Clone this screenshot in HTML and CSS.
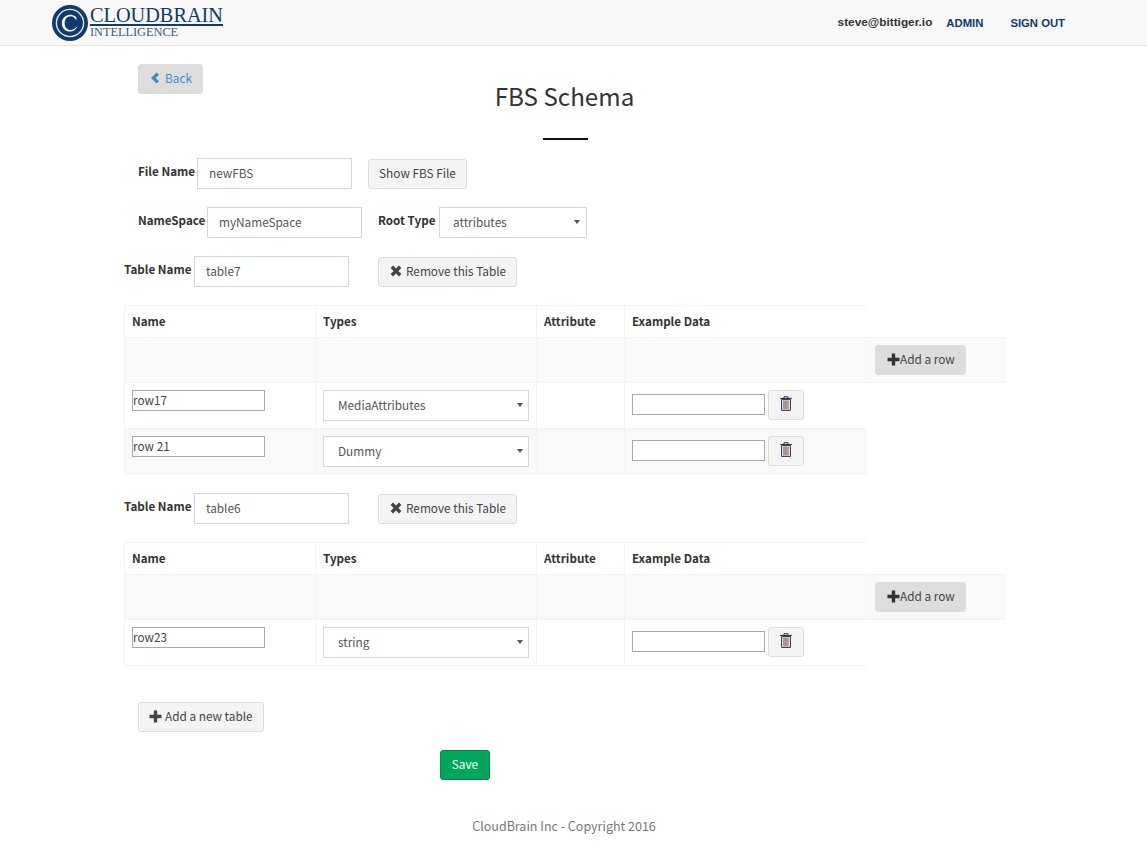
FILE: index.html
```html
<!DOCTYPE html>
<html lang="en">
<head>
<meta charset="utf-8">
<title>FBS Schema</title>
<link rel="stylesheet" href="styles.css">
</head>
<body>
<header class="topbar">
  <a class="logo">
    <svg class="logo-mark" width="36" height="36" viewBox="0 0 36 36">
      <circle cx="18" cy="18" r="18" fill="#0f3a6e"/>
      <circle cx="18" cy="18" r="13.6" fill="none" stroke="#dfe6ee" stroke-width="1.4"/>
      <path d="M24.5 12.6 L24.3 15.5 C23 12.4 21 11.3 18.8 11.3 C15 11.3 12.6 14.2 12.6 18.2 C12.6 22.3 15.2 25 18.9 25 C21.2 25 23.2 23.8 24.6 21.6 L25 22 C23.6 25 21 26.5 18 26.5 C13.3 26.5 9.9 23 9.9 18.2 C9.9 13.4 13.4 9.8 18 9.8 C20 9.8 21.6 10.4 23.4 11.5 Z" fill="#fff"/>
    </svg>
    <span class="logo-text">
      <span class="logo-top">CLOUDBRAIN</span>
      <span class="logo-bottom">INTELLIGENCE</span>
    </span>
  </a>
  <nav class="topnav">
    <span class="user">steve@bittiger.io</span>
    <a class="nav-link nav-admin">ADMIN</a>
    <a class="nav-link">SIGN OUT</a>
  </nav>
</header>

<main class="page">
  <div class="title-block">
    <button class="btn btn-back" type="button">
      <svg class="icon" width="10" height="12" viewBox="0 0 10 12"><path d="M6.6 0.4 L9 2.8 L5.8 6 L9 9.2 L6.6 11.6 L1 6 Z" fill="#3c8dbc"/></svg>
      <span>Back</span>
    </button>
    <h1 class="title">FBS Schema</h1>
  </div>
  <div class="title-rule"></div>

  <div class="form-row indent">
    <label class="field-label label-file">File Name</label>
    <input class="text-input" type="text" value="newFBS">
    <button class="btn btn-show" type="button">Show FBS File</button>
  </div>

  <div class="form-row indent">
    <label class="field-label label-ns">NameSpace</label>
    <input class="text-input" type="text" value="myNameSpace">
    <label class="field-label root-label">Root Type</label>
    <span class="select-wrap root-select">
      <select class="select"><option>attributes</option></select>
    </span>
  </div>

  <div class="form-row">
    <label class="field-label table-label">Table Name</label>
    <input class="text-input" type="text" value="table7">
    <button class="btn btn-remove" type="button">
      <svg class="icon" width="12" height="12" viewBox="0 0 12 12"><path d="M3 0.6 L6 3.6 L9 0.6 L11.4 3 L8.4 6 L11.4 9 L9 11.4 L6 8.4 L3 11.4 L0.6 9 L3.6 6 L0.6 3 Z" fill="#444"/></svg>
      <span>Remove this Table</span>
    </button>
  </div>

  <table class="schema">
    <colgroup><col class="c-name"><col class="c-types"><col class="c-attr"><col class="c-data"><col class="c-add"></colgroup>
    <thead>
      <tr><th>Name</th><th>Types</th><th>Attribute</th><th>Example Data</th></tr>
    </thead>
    <tbody>
      <tr class="odd add-row"><td></td><td></td><td></td><td></td>
        <td><button class="btn btn-add" type="button"><svg class="icon" width="13" height="13" viewBox="0 0 13 13"><path d="M4.8 0.5 H8.2 V4.8 H12.5 V8.2 H8.2 V12.5 H4.8 V8.2 H0.5 V4.8 H4.8 Z" fill="#333"/></svg><span>Add a row</span></button></td></tr>
      <tr>
        <td><input class="plain-input" type="text" value="row17"></td>
        <td><span class="select-wrap cell-select"><select class="select"><option>MediaAttributes</option></select></span></td>
        <td></td>
        <td><div class="data-cell"><input class="plain-input" type="text"><button class="btn btn-trash" type="button"><svg class="trash" width="12" height="15" viewBox="0 0 12 15"><path d="M4 2 V0.7 H8 V2" fill="none" stroke="#3b3b50" stroke-width="1"/><path d="M0.2 2.5 H11.8" stroke="#33334a" stroke-width="1.2"/><path d="M1.5 3.5 H10.5 V14.5 H1.5 Z" fill="#e2dad4" stroke="#45455e" stroke-width="1"/><path d="M4 4.5 V13.5" stroke="#4a6aa8" stroke-width="1.1"/><path d="M6 4.5 V13.5" stroke="#6a5a70" stroke-width="1.1"/><path d="M8 4.5 V13.5" stroke="#b86a38" stroke-width="1.1"/></svg></button></div></td>
      </tr>
      <tr class="odd">
        <td><input class="plain-input" type="text" value="row 21"></td>
        <td><span class="select-wrap cell-select"><select class="select"><option>Dummy</option></select></span></td>
        <td></td>
        <td><div class="data-cell"><input class="plain-input" type="text"><button class="btn btn-trash" type="button"><svg class="trash" width="12" height="15" viewBox="0 0 12 15"><path d="M4 2 V0.7 H8 V2" fill="none" stroke="#3b3b50" stroke-width="1"/><path d="M0.2 2.5 H11.8" stroke="#33334a" stroke-width="1.2"/><path d="M1.5 3.5 H10.5 V14.5 H1.5 Z" fill="#e2dad4" stroke="#45455e" stroke-width="1"/><path d="M4 4.5 V13.5" stroke="#4a6aa8" stroke-width="1.1"/><path d="M6 4.5 V13.5" stroke="#6a5a70" stroke-width="1.1"/><path d="M8 4.5 V13.5" stroke="#b86a38" stroke-width="1.1"/></svg></button></div></td>
      </tr>
    </tbody>
  </table>

  <div class="form-row">
    <label class="field-label table-label">Table Name</label>
    <input class="text-input" type="text" value="table6">
    <button class="btn btn-remove" type="button">
      <svg class="icon" width="12" height="12" viewBox="0 0 12 12"><path d="M3 0.6 L6 3.6 L9 0.6 L11.4 3 L8.4 6 L11.4 9 L9 11.4 L6 8.4 L3 11.4 L0.6 9 L3.6 6 L0.6 3 Z" fill="#444"/></svg>
      <span>Remove this Table</span>
    </button>
  </div>

  <table class="schema">
    <colgroup><col class="c-name"><col class="c-types"><col class="c-attr"><col class="c-data"><col class="c-add"></colgroup>
    <thead>
      <tr><th>Name</th><th>Types</th><th>Attribute</th><th>Example Data</th></tr>
    </thead>
    <tbody>
      <tr class="odd add-row"><td></td><td></td><td></td><td></td>
        <td><button class="btn btn-add" type="button"><svg class="icon" width="13" height="13" viewBox="0 0 13 13"><path d="M4.8 0.5 H8.2 V4.8 H12.5 V8.2 H8.2 V12.5 H4.8 V8.2 H0.5 V4.8 H4.8 Z" fill="#333"/></svg><span>Add a row</span></button></td></tr>
      <tr>
        <td><input class="plain-input" type="text" value="row23"></td>
        <td><span class="select-wrap cell-select"><select class="select"><option>string</option></select></span></td>
        <td></td>
        <td><div class="data-cell"><input class="plain-input" type="text"><button class="btn btn-trash" type="button"><svg class="trash" width="12" height="15" viewBox="0 0 12 15"><path d="M4 2 V0.7 H8 V2" fill="none" stroke="#3b3b50" stroke-width="1"/><path d="M0.2 2.5 H11.8" stroke="#33334a" stroke-width="1.2"/><path d="M1.5 3.5 H10.5 V14.5 H1.5 Z" fill="#e2dad4" stroke="#45455e" stroke-width="1"/><path d="M4 4.5 V13.5" stroke="#4a6aa8" stroke-width="1.1"/><path d="M6 4.5 V13.5" stroke="#6a5a70" stroke-width="1.1"/><path d="M8 4.5 V13.5" stroke="#b86a38" stroke-width="1.1"/></svg></button></div></td>
      </tr>
    </tbody>
  </table>

  <div class="new-table">
    <button class="btn btn-new" type="button">
      <svg class="icon" width="13" height="13" viewBox="0 0 13 13"><path d="M4.8 0.5 H8.2 V4.8 H12.5 V8.2 H8.2 V12.5 H4.8 V8.2 H0.5 V4.8 H4.8 Z" fill="#444"/></svg>
      <span>Add a new table</span>
    </button>
  </div>
  <div class="save-row"><button class="btn btn-save" type="button">Save</button></div>
  <footer class="footer">CloudBrain Inc - Copyright 2016</footer>
</main>
</body>
</html>
```
FILE: styles.css
```css
* { box-sizing: border-box; }
html, body { margin: 0; padding: 0; }
body {
  background: #fff;
  color: #333;
  font-family: "Noto Sans CJK SC", "Noto Sans", sans-serif;
  font-size: 11.8px;
  line-height: 20px;
}
.topbar {
  height: 46px;
  background: #f8f8f8;
  border-bottom: 1px solid #e7e7e7;
  display: flex;
  justify-content: space-between;
  padding: 5px 82px 0 52px;
}
.logo { display: flex; gap: 2px; align-items: flex-start; }
.logo-text {
  display: flex;
  flex-direction: column;
  font-family: "Liberation Serif", serif;
  padding-top: 2px;
}
.logo-top {
  font-size: 20.3px;
  line-height: 17px;
  color: #0f3a6e;
  border-bottom: 2px solid #0f3a6e;
  width: 133px;
  white-space: nowrap;
}
.logo-bottom {
  font-size: 12.3px;
  line-height: 13px;
  color: #3d587c;
  white-space: nowrap;
}
.topnav {
  display: flex;
  align-items: flex-start;
  font-family: "Liberation Sans", sans-serif;
  font-weight: 700;
  line-height: 16px;
  padding-top: 9px;
}
.user { color: #333; margin-right: 14px; font-size: 11.8px; }
.nav-link { color: #0f3a6e; margin-top: 1px; font-size: 11.3px; }
.nav-admin { margin-right: 27px; }
.page { width: 881px; margin-left: 124px; padding-top: 18px; }
.title-block { display: grid; height: 74px; }
.title-block > * { grid-area: 1 / 1; }
.btn {
  font: inherit;
  height: 30px;
  border: 1px solid #ddd;
  border-radius: 3px;
  background: #f4f4f4;
  color: #444;
  padding: 0 11px 2px;
  display: inline-flex;
  align-items: center;
  gap: 3px;
  white-space: nowrap;
}
.btn-back {
  justify-self: start;
  margin-left: 14px;
  background: #ddd;
  border-color: #ddd;
  color: #3c8dbc;
  width: 65px;
  gap: 5px;
}
.title {
  justify-self: center;
  margin: 14px 0 0;
  font-size: 24.2px;
  font-weight: 400;
  line-height: 36px;
  color: #333;
  align-self: start;
}
.title-rule { width: 45px; height: 2px; background: #111; margin: 0 0 18px 419px; }
.form-row { display: flex; align-items: flex-start; height: 31px; margin-bottom: 18px; }
.indent { margin-left: 14px; }
.field-label { font-weight: 700; font-size: 11.65px; margin: 3px 0 0; white-space: nowrap; line-height: 20px; flex: none; }
.label-file { width: 59px; }
.label-ns { width: 69px; }
.table-label { width: 70px; }
.root-label { width: 61px; margin-left: 16px; }
.text-input {
  width: 155px;
  height: 31px;
  border: 1px solid #d2d6de;
  padding: 0 11px 2px;
  font: inherit;
  color: #555;
  background: #fff;
  border-radius: 0;
  outline: none;
}
.btn-show { margin: 1px 0 0 16px; width: 99px; justify-content: center; }
.btn-remove { margin: 1px 0 0 29px; width: 139px; gap: 4px; }
.select-wrap { display: inline-block; position: relative; height: 31px; }
.select-wrap::after {
  content: "";
  position: absolute;
  right: 6px;
  top: 13px;
  border-left: 3px solid transparent;
  border-right: 3px solid transparent;
  border-top: 4px solid #555;
  pointer-events: none;
}
.select {
  appearance: none;
  -webkit-appearance: none;
  width: 100%;
  height: 31px;
  border: 1px solid #d2d6de;
  border-radius: 0;
  background: #fff;
  font: inherit;
  color: #555;
  padding: 0 14px 2px;
  display: block;
}
.root-select { width: 148px; }
.root-select .select { padding-left: 13px; }
.root-select::after { right: 7px; }
.cell-select { width: 206px; display: block; }
.schema {
  border-collapse: collapse;
  table-layout: fixed;
  width: 881px;
  margin-bottom: 18px;
}
.c-name { width: 191px; }
.c-types { width: 221px; }
.c-attr { width: 88px; }
.c-data { width: 242px; }
.c-add { width: 139px; }
.schema th, .schema td { border: 1px solid #f4f4f4; padding: 7px; vertical-align: top; }
.schema tr > :last-child { border-right: 0; }
.schema th { text-align: left; font-weight: 700; font-size: 11.65px; height: 32px; padding: 5px 7px; line-height: 20px; }
.schema tr.odd { background: #f9f9f9; }
.add-row td { height: 45px; }
.btn-add { background: #ddd; border-color: #ddd; width: 91px; gap: 0; margin-left: 1px; }
.plain-input {
  display: block;
  flex: none;
  width: 133px;
  height: 21px;
  border: 1px solid #a9a9a9;
  padding: 0 0 2px;
  font: inherit;
  color: #444;
  background: #fff;
  border-radius: 0;
  outline: none;
}
.data-cell { display: flex; align-items: flex-start; gap: 3px; }
.data-cell .plain-input { margin-top: 4px; }
.btn-trash { width: 36px; padding: 0; justify-content: center; }
.trash { margin-bottom: 4px; }
.new-table { margin: 36px 0 18px 14px; }
.btn-new { width: 126px; gap: 3px; padding: 0 10px 2px; }
.save-row { margin-left: 316px; }
.btn-save {
  width: 50px;
  justify-content: center;
  padding: 0 0 2px;
  background: #00a65a;
  border-color: #008d4c;
  color: #fff;
}
.footer { text-align: center; color: #777; margin: 36px 1px 0 0; font-size: 12.5px; line-height: 20px; }
.icon { flex: none; }
```
